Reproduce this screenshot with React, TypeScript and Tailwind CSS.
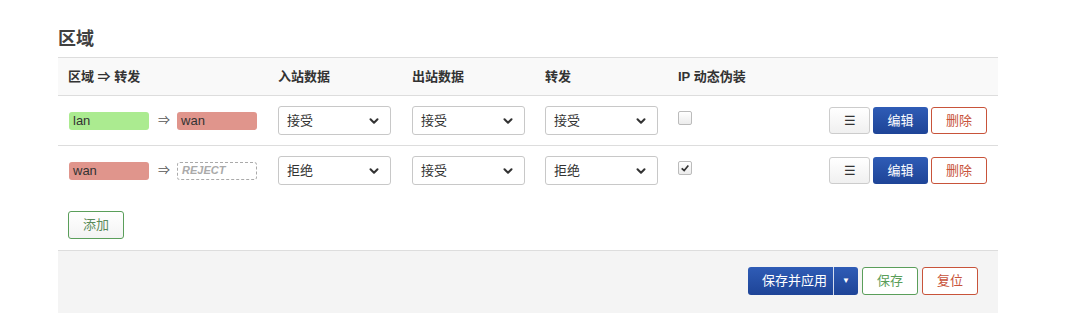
import { ChevronDown } from "lucide-react";

const FONT = { fontFamily: '"Liberation Sans", "Noto Sans CJK SC", sans-serif' };

function Select({ value }: { value: string }) {
  return (
    <div className="flex items-center justify-between w-[113px] h-[29px] pl-2 pr-[9px] border border-[#c8c8c8] rounded-[3px] bg-white text-[13px] text-[#333]">
      <span>{value}</span>
      <ChevronDown className="w-[14px] h-[14px] text-[#333]" strokeWidth={3.5} />
    </div>
  );
}

function Badge({ label, cls }: { label: string; cls: string }) {
  return (
    <span className={`flex items-center w-[80px] h-[18px] px-1 rounded-[3px] text-[13px] text-[#333] ${cls}`}>{label}</span>
  );
}

function Actions() {
  return (
    <div className="flex items-center gap-[3px]">
      <button className="w-[41px] h-[27px] border border-[#ccc] rounded-[3px] bg-gradient-to-b from-white to-[#f0f0f0] text-[13px] text-[#333]">☰</button>
      <button className="w-[55px] h-[27px] rounded-[3px] bg-gradient-to-b from-[#2f5cb6] to-[#1e4497] text-[13px] text-white">编辑</button>
      <button className="w-[56px] h-[27px] border border-[#c8533a] rounded-[3px] bg-white text-[13px] text-[#c8533a]">删除</button>
    </div>
  );
}

function Row({ src, dest, sel, masq }: { src: React.ReactNode; dest: React.ReactNode; sel: string[]; masq: boolean }) {
  return (
    <div className="grid grid-cols-[210px_134px_133px_133px_1fr] items-center h-[50px] border-t border-[#ddd]">
      <div className="flex items-center pl-[11px]">
        {src}
        <span className="ml-[9px] mr-[7px] text-[12px] text-[#555]">⇒</span>
        {dest}
      </div>
      <div className="pl-[10px]"><Select value={sel[0]} /></div>
      <div className="pl-[10px]"><Select value={sel[1]} /></div>
      <div className="pl-[10px]"><Select value={sel[2]} /></div>
      <div className="flex items-center justify-between pl-[10px] pr-[11px]">
        <span className="flex items-center justify-center w-[14px] h-[14px] mb-[5px] border border-[#bbb] rounded-[2px] bg-gradient-to-b from-white to-[#ececec]">
          {masq && (
            <svg viewBox="0 0 12 12" className="w-[10px] h-[10px]">
              <path d="M2 6.5 L5 9 L10 3" fill="none" stroke="#333" strokeWidth="2" />
            </svg>
          )}
        </span>
        <Actions />
      </div>
    </div>
  );
}

export default function App() {
  return (
    <div className="bg-white w-[1072px] h-[323px] px-[58px] pt-[26px]" style={FONT}>
      <h2 className="text-[18px] font-bold text-[#404040] leading-[26px] mb-[5px]">区域</h2>
      <div className="w-[940px]">
        <div className="grid grid-cols-[210px_134px_133px_133px_1fr] items-center h-[38px] bg-[#f9f9f9] border-t border-[#ddd] text-[13px] font-bold text-[#333]">
          <div className="pl-[10px]">区域 ⇒ 转发</div>
          <div className="pl-[10px]">入站数据</div>
          <div className="pl-[10px]">出站数据</div>
          <div className="pl-[10px]">转发</div>
          <div className="pl-[10px]">IP 动态伪装</div>
        </div>
        <Row
          src={<Badge label="lan" cls="bg-[#abeb90]" />}
          dest={<Badge label="wan" cls="bg-[#e0958c]" />}
          sel={["接受", "接受", "接受"]}
          masq={false}
        />
        <Row
          src={<Badge label="wan" cls="bg-[#e0958c]" />}
          dest={
            <span className="flex items-center w-[80px] h-[18px] px-1 border border-dashed border-[#aaa] rounded-[3px] text-[11px] italic font-bold text-[#aaa]">REJECT</span>
          }
          sel={["拒绝", "接受", "拒绝"]}
          masq={true}
        />
        <div className="pt-[16px] pb-[11px] pl-[10px]">
          <button className="w-[56px] h-[28px] border border-[#5a9e5a] rounded-[3px] bg-gradient-to-b from-white to-[#f3f3f3] text-[13px] text-[#5a8a5a]">添加</button>
        </div>
        <div className="flex justify-end items-center gap-[4px] h-[63px] bg-[#f4f4f4] border-t border-[#ddd] pr-[20px] pb-[2px]">
          <div className="flex h-[28px] rounded-[3px] bg-gradient-to-b from-[#2f5cb6] to-[#1e4497] text-[13px] text-white">
            <span className="flex items-center pl-[14px] pr-[6px] border-r border-white/80">保存并应用</span>
            <span className="flex items-center justify-center w-[24px] text-[8px]">▼</span>
          </div>
          <button className="w-[56px] h-[28px] border border-[#5a9e5a] rounded-[3px] bg-white text-[13px] text-[#5a9e5a]">保存</button>
          <button className="w-[56px] h-[28px] border border-[#c8533a] rounded-[3px] bg-white text-[13px] text-[#c8533a]">复位</button>
        </div>
      </div>
    </div>
  );
}
